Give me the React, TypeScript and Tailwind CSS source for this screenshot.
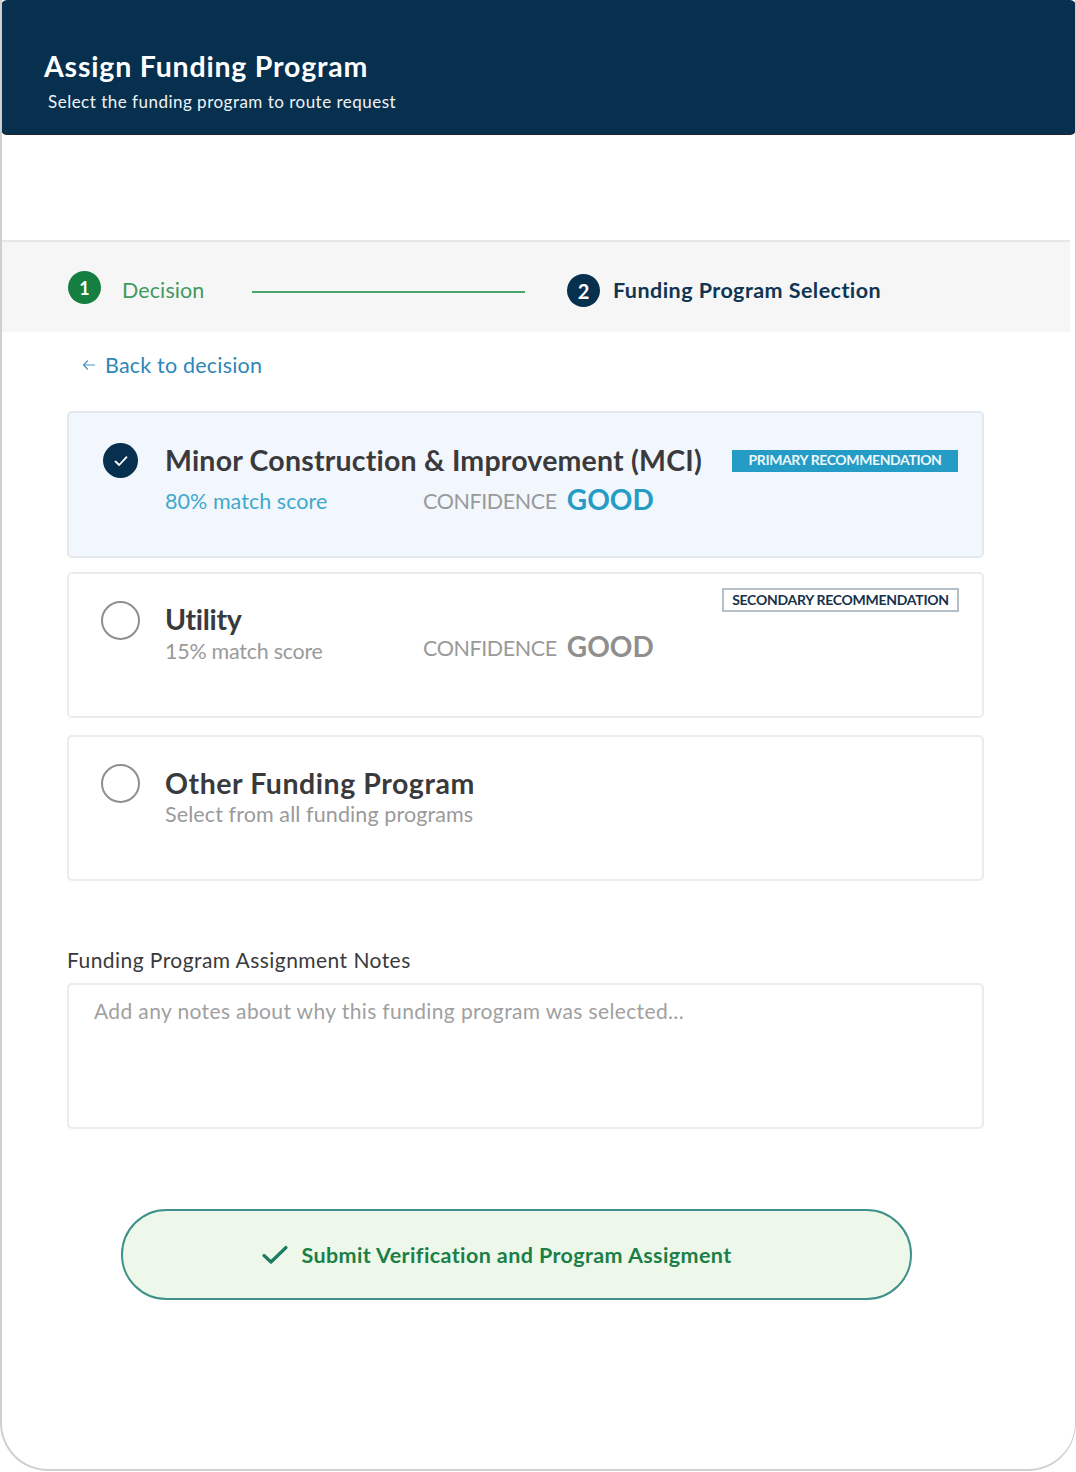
import React from "react";

function Radio({ checked }: { checked?: boolean }) {
  if (checked) {
    return (
      <div className="flex h-[35px] w-[35px] shrink-0 items-center justify-center rounded-full bg-[#06304e]">
        <svg width="18" height="18" viewBox="0 0 18 18" fill="none" stroke="#ffffff" strokeWidth="1.8" strokeLinecap="round" strokeLinejoin="round">
          <path d="M3.5 9.5 7.2 13 14.5 5.2" />
        </svg>
      </div>
    );
  }
  return <div className="h-[39px] w-[39px] shrink-0 rounded-full border-2 border-[#8f8f8f] bg-white" />;
}

export default function App() {
  return (
    <div className="h-[1472px] w-[1076px] bg-white font-['Lato','Liberation_Sans',sans-serif]">
      <div className="h-[1471px] w-[1076px] overflow-hidden rounded-b-[48px] border-b-2 border-l-2 border-r border-[#cfcfcf] bg-white">
        <header className="-ml-[1px] -mr-[1px] flex h-[135px] flex-col rounded-[6px] border-b border-[#222] bg-[#06304e] pl-[43px] pt-[49px]">
          <h1 className="text-[28.5px] font-bold leading-[34px] tracking-[0.8px] text-white">Assign Funding Program</h1>
          <p className="ml-[4px] mt-[9px] text-[17px] leading-[20px] tracking-[0.49px] text-[#f0f3f6]">Select the funding program to route request</p>
        </header>

        <div className="mt-[105px] flex h-[92px] w-[1068px] items-center border-t-2 border-[#e6e6e6] bg-[#f6f6f6] pl-[66px] pt-[7px]">
          <div className="-mt-[6px] flex h-[33px] w-[33px] shrink-0 items-center justify-center rounded-full bg-[#157f41] text-[18px] font-bold leading-none text-white">1</div>
          <span className="-mt-[2px] ml-[21px] w-[130px] text-[21.5px] leading-[26px] tracking-[0.1px] text-[#3f9a62]">Decision</span>
          <div className="mt-[2px] h-[2px] w-[273px] bg-[#4ba56f]" />
          <div className="ml-[42px] flex h-[33px] w-[33px] shrink-0 items-center justify-center rounded-full bg-[#06304e] text-[20px] font-bold leading-none text-white">2</div>
          <span className="-mt-[2px] ml-[13px] text-[21.5px] font-bold leading-[26px] tracking-[0.45px] text-[#0f3553]">Funding Program Selection</span>
        </div>

        <a className="ml-[80px] mt-[20px] flex h-[26px] items-center text-[21.5px] leading-[26px] tracking-[0.2px] text-[#2f86b9]">
          <svg width="14" height="12" viewBox="0 0 14 12" fill="none" stroke="#4a94c2" strokeWidth="1.2" strokeLinecap="round" strokeLinejoin="round">
            <path d="M12.5 6H1.5M5.5 2 1.5 6l4 4" />
          </svg>
          <span className="ml-[9px]">Back to decision</span>
        </a>

        <main className="ml-[65px] mt-[33px] flex w-[917px] flex-col">
          <section className="flex h-[147px] justify-between rounded-[5px] border-2 border-[#e3e8ee] bg-[#f2f7fe] pl-[34px] pr-[24px] pt-[30px]">
            <Radio checked />
            <div className="ml-[27px] flex-1">
              <h2 className="text-[28.5px] font-bold leading-[34px] tracking-[0.2px] text-[#3a3a3c]">Minor Construction &amp; Improvement (MCI)</h2>
              <div className="mt-[11px] flex items-start">
                <span className="w-[258px] text-[21.5px] leading-[26px] tracking-[0.05px] text-[#3ea9cd]">80% match score</span>
                <span className="text-[21.5px] leading-[26px] tracking-[-0.4px] text-[#9a9a9a]">CONFIDENCE</span>
                <span className="-mt-[6px] ml-[10px] text-[28px] font-bold leading-[34px] text-[#259cc6]">GOOD</span>
              </div>
            </div>
            <div className="mt-[7px] flex h-[22px] w-[226px] shrink-0 items-center justify-center bg-[#259cc6] pb-[2px] text-[14px] font-bold leading-none tracking-[-0.38px] text-[#eef7fb]">PRIMARY RECOMMENDATION</div>
          </section>

          <section className="mt-[14px] flex h-[146px] justify-between rounded-[5px] border-2 border-[#ececec] bg-white pl-[32px] pr-[23px] pt-[27px]">
            <Radio />
            <div className="ml-[25px] flex-1">
              <h2 className="mt-[1px] text-[28.5px] font-bold leading-[34px] tracking-[-0.3px] text-[#3a3a3c]">Utility</h2>
              <div className="mt-[2px] flex items-start">
                <span className="w-[258px] text-[21.5px] leading-[26px] tracking-[-0.27px] text-[#9a9a9a]">15% match score</span>
                <span className="-mt-[3px] text-[21.5px] leading-[26px] tracking-[-0.4px] text-[#9a9a9a]">CONFIDENCE</span>
                <span className="-mt-[9px] ml-[10px] text-[28px] font-bold leading-[34px] text-[#8f8f8f]">GOOD</span>
              </div>
            </div>
            <div className="-mt-[13px] flex h-[24px] w-[237px] shrink-0 items-center justify-center border-2 border-[#b4bfc8] bg-white pb-[1px] text-[14px] font-bold leading-none tracking-[-0.28px] text-[#16324a]">SECONDARY RECOMMENDATION</div>
          </section>

          <section className="mt-[17px] flex h-[146px] rounded-[5px] border-2 border-[#ececec] bg-white pl-[32px] pr-[24px] pt-[27px]">
            <Radio />
            <div className="ml-[25px] flex-1">
              <h2 className="mt-[2px] text-[28.5px] font-bold leading-[34px] tracking-[0.55px] text-[#3a3a3c]">Other Funding Program</h2>
              <p className="mt-[1px] text-[21.5px] leading-[26px] tracking-[0.1px] text-[#9a9a9a]">Select from all funding programs</p>
            </div>
          </section>

          <label className="mt-[66px] text-[21px] leading-[26px] tracking-[0.44px] text-[#3a3a3c]">Funding Program Assignment Notes</label>
          <textarea
            readOnly
            className="mt-[10px] h-[146px] w-[917px] resize-none rounded-[5px] border-2 border-[#ececec] bg-white px-[25px] pt-[13px] text-[21px] leading-[26px] tracking-[0.37px] text-[#9a9a9a] outline-none placeholder:text-[#a0a0a0]"
            placeholder="Add any notes about why this funding program was selected..."
          />

          <button className="ml-[54px] mt-[80px] flex h-[91px] w-[791px] items-center justify-center rounded-full border-2 border-[#3f9189] bg-[#edf8ea] pr-[40px]">
            <svg width="28" height="22" viewBox="0 0 28 22" fill="none" stroke="#1d7a63" strokeWidth="3.2" strokeLinecap="round" strokeLinejoin="round">
              <path d="M3 11.5 10 18 25 3.5" />
            </svg>
            <span className="ml-[12px] text-[21.5px] font-bold leading-[26px] tracking-[0.4px] text-[#1b7f47]">Submit Verification and Program Assigment</span>
          </button>
        </main>
      </div>
    </div>
  );
}
